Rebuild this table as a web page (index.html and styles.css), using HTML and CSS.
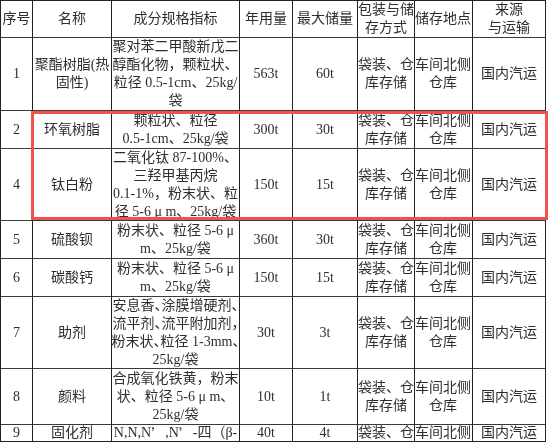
FILE: index.html
```html
<!DOCTYPE html>
<html lang="zh-CN">
<head>
<meta charset="utf-8">
<title>原辅材料一览表</title>
<link rel="stylesheet" href="styles.css">
</head>
<body>
<div class="page">
  <div class="frame">
    <div class="sheet">
      <div class="c">序号</div>
      <div class="c">名称</div>
      <div class="c">成分规格指标</div>
      <div class="c">年用量</div>
      <div class="c">最大储量</div>
      <div class="c">包装与储<br>存方式</div>
      <div class="c loc">储存地点</div>
      <div class="c">来源<br>与运输</div>

      <div class="c">1</div>
      <div class="c">聚酯树脂(热<br>固性)</div>
      <div class="c">聚对苯二甲酸新戊二<br>醇酯化物，颗粒状、<br>粒径 0.5-1cm、25kg/<br>袋</div>
      <div class="c">563t</div>
      <div class="c">60t</div>
      <div class="c">袋装、仓<br>库存储</div>
      <div class="c loc">车间北侧<br>仓库</div>
      <div class="c">国内汽运</div>

      <div class="c">2</div>
      <div class="c">环氧树脂</div>
      <div class="c">颗粒状、粒径<br>0.5-1cm、25kg/袋</div>
      <div class="c">300t</div>
      <div class="c">30t</div>
      <div class="c">袋装、仓<br>库存储</div>
      <div class="c loc">车间北侧<br>仓库</div>
      <div class="c">国内汽运</div>

      <div class="c">4</div>
      <div class="c">钛白粉</div>
      <div class="c">二氧化钛 87-100%、<br>三羟甲基丙烷<br>0.1-1%，粉末状、粒<br>径 5-6 μ m、25kg/袋</div>
      <div class="c">150t</div>
      <div class="c">15t</div>
      <div class="c">袋装、仓<br>库存储</div>
      <div class="c loc">车间北侧<br>仓库</div>
      <div class="c">国内汽运</div>

      <div class="c">5</div>
      <div class="c">硫酸钡</div>
      <div class="c">粉末状、粒径 5-6 μ<br>m、25kg/袋</div>
      <div class="c">360t</div>
      <div class="c">30t</div>
      <div class="c">袋装、仓<br>库存储</div>
      <div class="c loc">车间北侧<br>仓库</div>
      <div class="c">国内汽运</div>

      <div class="c">6</div>
      <div class="c">碳酸钙</div>
      <div class="c">粉末状、粒径 5-6 μ<br>m、25kg/袋</div>
      <div class="c">150t</div>
      <div class="c">15t</div>
      <div class="c">袋装、仓<br>库存储</div>
      <div class="c loc">车间北侧<br>仓库</div>
      <div class="c">国内汽运</div>

      <div class="c">7</div>
      <div class="c">助剂</div>
      <div class="c tight">安息香、涂膜增硬剂、<br>流平剂、流平附加剂，<br>粉末状、粒径 1-3mm、<br>25kg/袋</div>
      <div class="c">30t</div>
      <div class="c">3t</div>
      <div class="c">袋装、仓<br>库存储</div>
      <div class="c loc">车间北侧<br>仓库</div>
      <div class="c">国内汽运</div>

      <div class="c">8</div>
      <div class="c">颜料</div>
      <div class="c">合成氧化铁黄，粉末<br>状、粒径 5-6 μ m、<br>25kg/袋</div>
      <div class="c">10t</div>
      <div class="c">1t</div>
      <div class="c">袋装、仓<br>库存储</div>
      <div class="c loc">车间北侧<br>仓库</div>
      <div class="c">国内汽运</div>

      <div class="c top">9</div>
      <div class="c top">固化剂</div>
      <div class="c top">N,N,N<span class="cjk">’</span>,N<span class="cjk">’</span>-四（β-</div>
      <div class="c top">40t</div>
      <div class="c top">4t</div>
      <div class="c top">袋装、仓</div>
      <div class="c top loc">车间北侧</div>
      <div class="c top">国内汽运</div>
    </div>
  </div>
  <div class="highlight"></div>
</div>
</body>
</html>
```

FILE: styles.css
```css
* {
  box-sizing: border-box;
}

html, body {
  margin: 0;
  padding: 0;
  background: #ffffff;
}

body {
  width: 549px;
  height: 444px;
  overflow: hidden;
  font-family: "Liberation Serif", "Noto Sans CJK SC", serif;
  font-size: 14px;
  line-height: 18px;
  color: #2e2e2e;
}

.page {
  position: relative;
  width: 549px;
  height: 444px;
}

.frame {
  width: 546px;
  height: 442px;
  overflow: hidden;
  border-bottom: 1px solid #222;
}

.sheet {
  display: grid;
  grid-template-columns: 32px 79px 128px 53px 65px 57px 58px 73px;
  grid-template-rows: 37px 73px 38px 72px 38px 38px 72px 56px 40px;
  width: 546px;
  border-left: 1px solid #222;
  border-top: 1px solid #222;
  filter: grayscale(1);
}

.c {
  display: flex;
  align-items: center;
  justify-content: center;
  text-align: center;
  white-space: nowrap;
  border-right: 1px solid #222;
  border-bottom: 1px solid #3a3a3a;
  padding: 0;
}

.c.top {
  align-items: flex-start;
  line-height: 16px;
}

.loc {
  padding-right: 1px;
}

.tight {
  font-feature-settings: "halt";
}

.cjk {
  font-family: "Noto Sans CJK SC", sans-serif;
}

.highlight {
  position: absolute;
  left: 31px;
  top: 111px;
  width: 517px;
  height: 109px;
  border: 3px solid #ef5350;
  pointer-events: none;
}
```
